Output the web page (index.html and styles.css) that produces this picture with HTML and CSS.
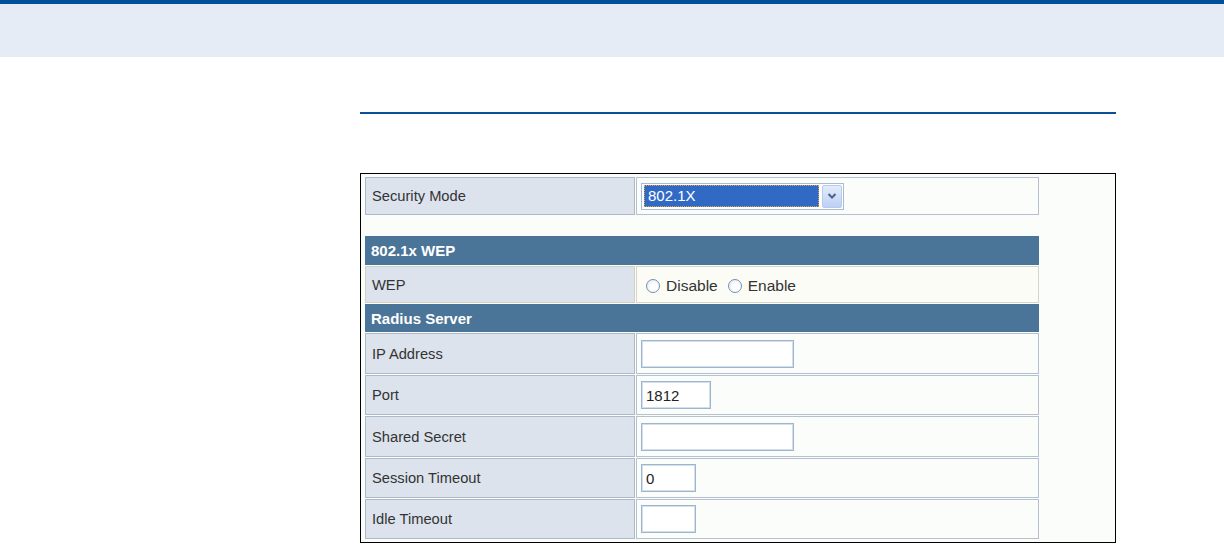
FILE: index.html
```html
<!DOCTYPE html>
<html>
<head>
    <link rel="stylesheet" href="styles.css">
</head>
<body>
<div class="topband"></div>
<div class="page">
    <div class="rule"></div>
    <div class="frame">
        <table class="cfg">
            <tr class="r-sec">
                <td class="label">Security Mode</td>
                <td class="value">
                    <div class="select">
                        <span class="sel-val">802.1X</span>
                        <span class="sel-btn">
                            <svg width="10" height="8" viewBox="0 0 10 8"><polyline points="1.5,2 5,5.5 8.5,2" fill="none" stroke="#4d6185" stroke-width="2"/></svg>
                        </span>
                    </div>
                </td>
            </tr>
            <tr class="r-gap"><td colspan="2" class="gap"></td></tr>
            <tr class="r-head1"><td colspan="2" class="head">802.1x WEP</td></tr>
            <tr class="r-wep">
                <td class="label wep">WEP</td>
                <td class="value wep">
                    <div class="radios">
                        <label class="radio"><span class="dot"></span>Disable</label>
                        <label class="radio"><span class="dot"></span>Enable</label>
                    </div>
                </td>
            </tr>
            <tr class="r-head2"><td colspan="2" class="head">Radius Server</td></tr>
            <tr class="r41">
                <td class="label">IP Address</td>
                <td class="value"><input type="text" class="text w-ip" value=""></td>
            </tr>
            <tr class="r40">
                <td class="label">Port</td>
                <td class="value"><input type="text" class="text w-port" value="1812"></td>
            </tr>
            <tr class="r41">
                <td class="label">Shared Secret</td>
                <td class="value"><input type="text" class="text w-ip" value=""></td>
            </tr>
            <tr class="r40">
                <td class="label">Session Timeout</td>
                <td class="value"><input type="text" class="text w-short" value="0"></td>
            </tr>
            <tr class="r40">
                <td class="label">Idle Timeout</td>
                <td class="value"><input type="text" class="text w-short" value=""></td>
            </tr>
        </table>
    </div>
</div>
</body>
</html>
```

FILE: styles.css
```css
body {
    margin: 0;
    background: #ffffff;
    font-family: "Liberation Sans", Arial, sans-serif;
}
.topband {
    height: 53px;
    border-top: 4px solid #00509a;
    background-color: #e5ecf5;
}
.page {
    margin-left: 360px;
    width: 756px;
}
.rule {
    margin-top: 55px;
    height: 2px;
    background-color: #0b4f96;
}
.frame {
    margin-top: 59px;
    border: 1px solid #000;
    background-color: #fbfdfb;
    padding: 2px 0 2px 3px;
}
.cfg {
    border-collapse: separate;
    border-spacing: 1px;
    table-layout: fixed;
    width: 676px;
    font-size: 14.7px;
    color: #333;
}
.cfg td {
    padding: 0 6px;
    vertical-align: middle;
}
.cfg .label {
    width: 256px;
    background-color: #dce3ed;
    border: 1px solid #aeb9ca;
}
.cfg .value {
    background-color: #fbfdfb;
    border: 1px solid #b5c1d1;
    padding-left: 4px;
    font-size: 15px;
}
.cfg .label.wep {
    border-color: #d3d0c2;
}
.cfg .value.wep {
    background-color: #fbfcf5;
    border-color: #d8d5c6;
    padding-left: 9px;
}
.cfg .gap {
    border: none;
    padding: 0;
}
.cfg .head {
    background-color: #4b7598;
    color: #fff;
    font-weight: bold;
    font-size: 15px;
    border: none;
}
.r-sec { height: 38px; }
.r-gap { height: 19px; }
.r-head1 { height: 29px; }
.r-wep { height: 37px; }
.r-head2 { height: 28px; }
.r41 { height: 41px; }
.r40 { height: 40px; }

.select {
    display: flex;
    align-items: center;
    width: 203px;
    height: 27px;
    box-sizing: border-box;
    border: 1px solid #a8bbd3;
    padding: 1px 1px 1px 2px;
    background: #fff;
}
.sel-val {
    width: 176px;
    height: 22px;
    box-sizing: border-box;
    background-color: #316ac5;
    border: 1px dotted #d9a441;
    color: #fff;
    line-height: 20px;
    padding-left: 3px;
}
.sel-btn {
    margin-left: 3px;
    width: 20px;
    height: 23px;
    box-sizing: border-box;
    border: 1px solid #b9cbe9;
    border-radius: 2px;
    background: linear-gradient(#e3ecfc, #bcd0f5);
    display: flex;
    align-items: center;
    justify-content: center;
}
.radios {
    display: flex;
    align-items: center;
    gap: 10px;
    padding-top: 2px;
    font-size: 15.5px;
}
.radio {
    display: flex;
    align-items: center;
}
.radio .dot {
    width: 14px;
    height: 14px;
    box-sizing: border-box;
    border: 1px solid #7990ab;
    border-radius: 50%;
    background: radial-gradient(circle at 60% 60%, #fff 30%, #dde4ee 100%);
    margin-right: 6px;
}
input[class~="text"] {
    height: 28px;
    box-sizing: border-box;
    border: 1px solid #9fb4cd;
    box-shadow: inset 0 0 0 1px #d4dfec;
    padding: 0 4px;
    font-family: "Liberation Sans", Arial, sans-serif;
    font-size: 15px;
    color: #222;
    background: #fff;
    vertical-align: middle;
}
.w-ip { width: 153px; }
.w-port { width: 70px; }
.w-short { width: 55px; }
```
